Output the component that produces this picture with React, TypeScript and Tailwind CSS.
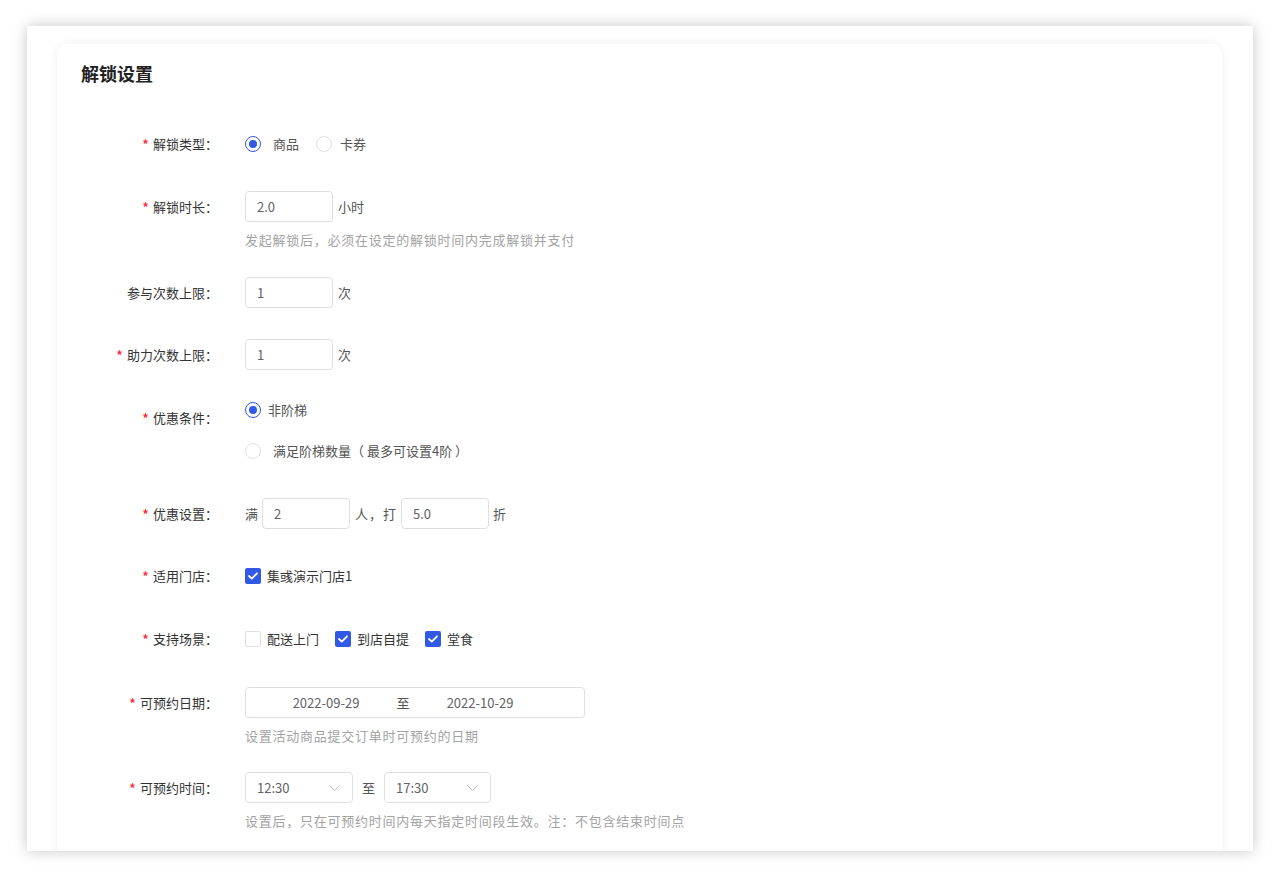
import React from "react";

const FONT = { fontFamily: '"Noto Sans CJK SC", "Noto Sans", sans-serif' };

function Label({ text, required }: { text: string; required?: boolean }) {
  return (
    <div className="w-[137px] shrink-0 h-[31px] flex items-center justify-end text-[13px] text-[#333]">
      {required && <span className="text-[#f5222d] text-[15px] mr-[4px] leading-none mt-[1px]">*</span>}
      <span>{text}：</span>
    </div>
  );
}

function Radio({ checked }: { checked?: boolean }) {
  return checked ? (
    <span className="w-[16px] h-[16px] rounded-full border border-[#3259e6] bg-white flex items-center justify-center shrink-0">
      <span className="w-[8px] h-[8px] rounded-full bg-[#3259e6]" />
    </span>
  ) : (
    <span className="block w-[16px] h-[16px] rounded-full border border-[#dcdfe6] bg-white shrink-0" />
  );
}

function Checkbox({ checked }: { checked?: boolean }) {
  return checked ? (
    <span className="w-[16px] h-[16px] rounded-[2px] bg-[#3259e6] flex items-center justify-center shrink-0">
      <svg width="10" height="8" viewBox="0 0 10 8" fill="none">
        <path d="M1 4 L3.8 6.6 L9 1.3" stroke="white" strokeWidth="1.8" strokeLinecap="round" strokeLinejoin="round" />
      </svg>
    </span>
  ) : (
    <span className="block w-[16px] h-[16px] rounded-[2px] border border-[#dcdfe6] bg-white shrink-0" />
  );
}

function Input({ value, w = "w-[88px]" }: { value: string; w?: string }) {
  return (
    <div className={`${w} h-[31px] border border-[#dcdfe6] rounded-[4px] bg-white flex items-center pl-[11px] text-[13px] text-[#606266]`}>
      {value}
    </div>
  );
}

function Help({ text }: { text: string }) {
  return <div className="mt-[9px] h-[17px] leading-[17px] text-[13px] tracking-[0.75px] text-[#a3a3a3] whitespace-nowrap">{text}</div>;
}

function Chevron() {
  return (
    <svg width="11" height="6" viewBox="0 0 11 6" fill="none">
      <path d="M0.5 0.5 L5.5 5.5 L10.5 0.5" stroke="#b8bcc4" strokeWidth="1" />
    </svg>
  );
}

function Select({ value, w }: { value: string; w: string }) {
  return (
    <div className={`${w} h-[31px] border border-[#dcdfe6] rounded-[4px] bg-white flex items-center justify-between pl-[11px] pr-[12px] text-[13px] text-[#606266]`}>
      <span>{value}</span>
      <Chevron />
    </div>
  );
}

export default function App() {
  return (
    <div className="w-[1280px] h-[878px] bg-white overflow-hidden pt-[26px] pl-[27px] [text-spacing-trim:space-all]" style={FONT}>
      <div className="w-[1226px] h-[825px] bg-white overflow-hidden shadow-[0_0_14px_rgba(0,0,0,0.22)] pt-[18px] pl-[30px]">
        <div className="w-[1165px] h-[900px] bg-white rounded-t-[10px] shadow-[0_0_10px_rgba(0,0,0,0.07)] px-[24px] pt-[16px]">
          <div className="h-[26px] leading-[26px] text-[18px] font-bold text-[#222]">解锁设置</div>

          <div className="mt-[42px] flex flex-col">
            {/* 解锁类型 */}
            <div className="flex items-start mb-[32px]">
              <Label text="解锁类型" required />
              <div className="ml-[27px] h-[31px] flex items-center text-[13px] text-[#555]">
                <Radio checked />
                <span className="ml-[12px]">商品</span>
                <span className="ml-[17px] flex"><Radio /></span>
                <span className="ml-[8px]">卡券</span>
              </div>
            </div>

            {/* 解锁时长 */}
            <div className="flex items-start mb-[29px]">
              <Label text="解锁时长" required />
              <div className="ml-[27px] flex flex-col">
                <div className="flex items-center">
                  <Input value="2.0" />
                  <span className="ml-[5px] text-[13px] text-[#555]">小时</span>
                </div>
                <Help text="发起解锁后，必须在设定的解锁时间内完成解锁并支付" />
              </div>
            </div>

            {/* 参与次数上限 */}
            <div className="flex items-start mb-[31px]">
              <Label text="参与次数上限" />
              <div className="ml-[27px] flex items-center">
                <Input value="1" />
                <span className="ml-[5px] text-[13px] text-[#555]">次</span>
              </div>
            </div>

            {/* 助力次数上限 */}
            <div className="flex items-start mb-[32px]">
              <Label text="助力次数上限" required />
              <div className="ml-[27px] flex items-center">
                <Input value="1" />
                <span className="ml-[5px] text-[13px] text-[#555]">次</span>
              </div>
            </div>

            {/* 优惠条件 */}
            <div className="flex items-start mb-[31px]">
              <Label text="优惠条件" required />
              <div className="ml-[27px] flex flex-col h-[65px] text-[13px] text-[#555]">
                <div className="h-[16px] flex items-center">
                  <Radio checked />
                  <span className="ml-[7px]">非阶梯</span>
                </div>
                <div className="h-[16px] mt-[25px] flex items-center">
                  <Radio />
                  <span className="ml-[12px] whitespace-nowrap">
                    满足阶梯数量<span className="inline-block w-[13px] text-right">（</span>&nbsp;最多可设置4阶&nbsp;<span className="inline-block w-[13px] text-left">）</span>
                  </span>
                </div>
              </div>
            </div>

            {/* 优惠设置 */}
            <div className="flex items-start mb-[31px]">
              <Label text="优惠设置" required />
              <div className="ml-[27px] flex items-center text-[13px] text-[#555]">
                <span className="mr-[4px]">满</span>
                <Input value="2" />
                <span className="ml-[5px] mr-[4px] tracking-[1px]">人，打</span>
                <Input value="5.0" />
                <span className="ml-[4px]">折</span>
              </div>
            </div>

            {/* 适用门店 */}
            <div className="flex items-start mb-[32px]">
              <Label text="适用门店" required />
              <div className="ml-[27px] h-[31px] flex items-center text-[13px] text-[#333]">
                <Checkbox checked />
                <span className="ml-[6px]">集彧演示门店1</span>
              </div>
            </div>

            {/* 支持场景 */}
            <div className="flex items-start mb-[33px]">
              <Label text="支持场景" required />
              <div className="ml-[27px] h-[31px] flex items-center text-[13px] text-[#333]">
                <Checkbox />
                <span className="ml-[6px]">配送上门</span>
                <span className="ml-[16px] flex"><Checkbox checked /></span>
                <span className="ml-[6px]">到店自提</span>
                <span className="ml-[16px] flex"><Checkbox checked /></span>
                <span className="ml-[6px]">堂食</span>
              </div>
            </div>

            {/* 可预约日期 */}
            <div className="flex items-start mb-[28px]">
              <Label text="可预约日期" required />
              <div className="ml-[27px] flex flex-col">
                <div className="w-[340px] h-[31px] border border-[#dcdfe6] rounded-[4px] bg-white flex items-center text-[13px] text-[#606266]">
                  <span className="ml-[12px] w-[136px] text-center">2022-09-29</span>
                  <span className="w-[18px] text-center text-[#555]">至</span>
                  <span className="w-[136px] text-center">2022-10-29</span>
                </div>
                <Help text="设置活动商品提交订单时可预约的日期" />
              </div>
            </div>

            {/* 可预约时间 */}
            <div className="flex items-start">
              <Label text="可预约时间" required />
              <div className="ml-[27px] flex flex-col">
                <div className="flex items-center">
                  <Select value="12:30" w="w-[108px]" />
                  <span className="mx-[9px] text-[13px] text-[#555]">至</span>
                  <Select value="17:30" w="w-[107px]" />
                </div>
                <Help text="设置后，只在可预约时间内每天指定时间段生效。注：不包含结束时间点" />
              </div>
            </div>
          </div>
        </div>
      </div>
    </div>
  );
}
